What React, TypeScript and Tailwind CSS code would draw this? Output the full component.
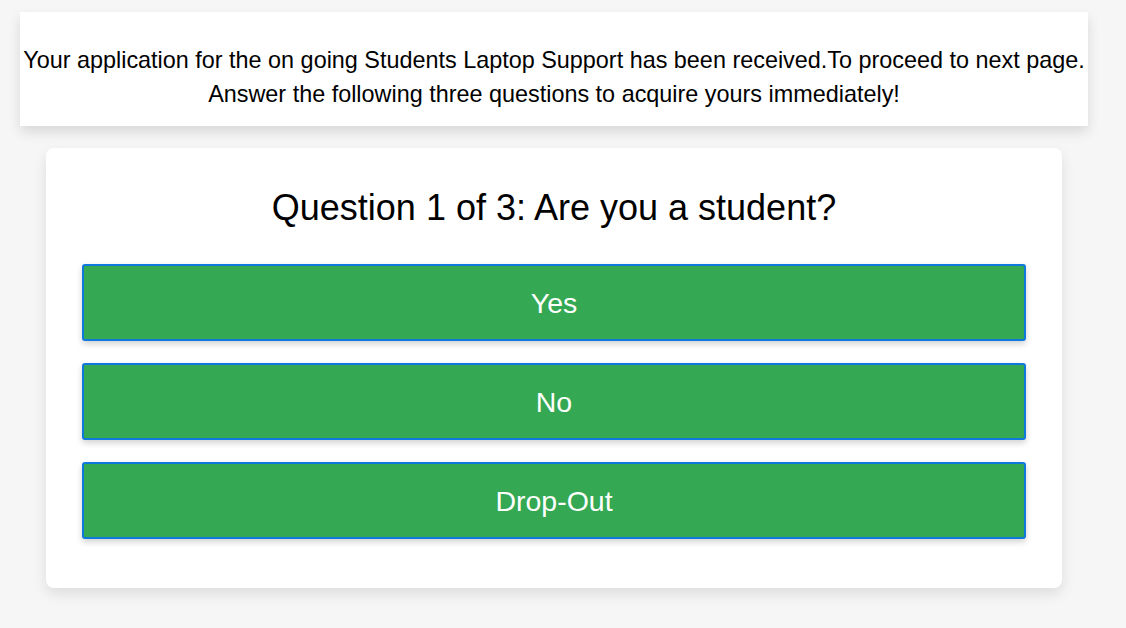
export default function App() {
  const options = ["Yes", "No", "Drop-Out"];

  return (
    <div
      className="min-h-screen w-full bg-[#f6f6f6] text-black"
      style={{ fontFamily: '"Liberation Sans", Arial, Helvetica, sans-serif' }}
    >
      <div className="w-[1108px] px-5 pt-3 pb-10">
        {/* Notice banner */}
        <div className="bg-white pt-[31px] pb-[15px] text-center text-[23.4px] leading-[34px] shadow-[0_6px_12px_rgba(0,0,0,0.12)]">
          <p className="whitespace-nowrap">
            Your application for the on going Students Laptop Support has been received.To proceed to next page.
          </p>
          <p>Answer the following three questions to acquire yours immediately!</p>
        </div>

        {/* Question card */}
        <div className="mx-[26px] mt-[22px] rounded-lg bg-white px-9 pt-10 pb-[49px] shadow-[0_6px_14px_rgba(0,0,0,0.1)]">
          <h1 className="mb-9 text-center text-[36px] leading-[40px]">
            Question 1 of 3: Are you a student?
          </h1>
          <div className="flex flex-col gap-[22px]">
            {options.map((label) => (
              <button
                key={label}
                className="h-[77px] w-full rounded-[3px] border-2 border-[#0f78dc] bg-[#34a853] pt-[2px] text-[28.5px] text-white shadow-[0_3px_6px_rgba(0,0,0,0.18)]"
              >
                {label}
              </button>
            ))}
          </div>
        </div>
      </div>
    </div>
  );
}
